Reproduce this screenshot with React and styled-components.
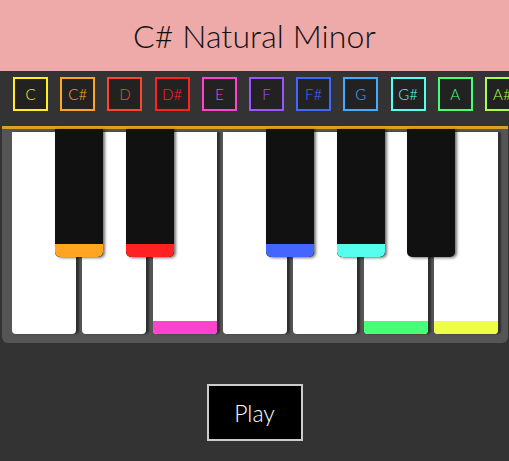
import React from 'react';
import styled, { createGlobalStyle } from 'styled-components';

const GlobalStyle = createGlobalStyle`
    html, body {
        margin: 0;
        padding: 0;
        background: #333333;
        font-family: Lato, "Open Sans", sans-serif;
        overflow: hidden;
    }
`;

const NOTES = [
    { name: 'C', color: '#ffee22' },
    { name: 'C#', color: '#ffa522' },
    { name: 'D', color: '#ff4433' },
    { name: 'D#', color: '#ff2222' },
    { name: 'E', color: '#ff44cc' },
    { name: 'F', color: '#9955ff' },
    { name: 'F#', color: '#4466ff' },
    { name: 'G', color: '#44aaff' },
    { name: 'G#', color: '#55ffee' },
    { name: 'A', color: '#44ff77' },
    { name: 'A#', color: '#aaff44' },
    { name: 'B', color: '#eeff44' },
];

const colorOf = (name) => NOTES.find(n => n.name === name).color;

const SCALE = ['C#', 'D#', 'E', 'F#', 'G#', 'A', 'B'];

// white keys, each with the black key that sits to its right (if any)
const WHITE_KEYS = [
    { name: 'C', sharp: 'C#' },
    { name: 'D', sharp: 'D#' },
    { name: 'E' },
    { name: 'F', sharp: 'F#' },
    { name: 'G', sharp: 'G#' },
    { name: 'A', sharp: 'A#' },
    { name: 'B' },
];

const Page = styled.div`
    display: flex;
    flex-direction: column;
    min-height: 461px;
    background: #333333;
`;

const Header = styled.header`
    height: 71px;
    background: #eea9a9;
    display: flex;
    align-items: center;
    justify-content: center;
`;

const Title = styled.h1`
    margin: 0;
    font-size: 32px;
    font-weight: 300;
    color: #111;
    letter-spacing: 0.1px;
`;

const NoteRow = styled.div`
    display: flex;
    gap: 12.2px;
    padding: 6px 13px 0;
    height: 49px;
    overflow: hidden;
    white-space: nowrap;
`;

const NoteBox = styled.div`
    flex-shrink: 0;
    box-sizing: border-box;
    width: 35px;
    height: 34px;
    border: 2px solid ${p => p.$color};
    background: #222222;
    color: ${p => p.$color};
    font-size: 15px;
    font-weight: 300;
    display: flex;
    align-items: center;
    justify-content: center;
`;

const Piano = styled.div`
    position: relative;
    margin: 0 1px 0 2px;
    border-top: 3px solid #d9a21f;
    background: #555555;
    border-radius: 0 0 6px 6px;
    padding: 3px 10px 9px;
    display: flex;
    gap: 6.33px;
`;

const WhiteKey = styled.div`
    position: relative;
    flex: 1;
    height: 202px;
    background: #ffffff;
    border-radius: 0 0 4px 4px;
    box-shadow: 3px 0 2px rgba(0, 0, 0, 0.45);
    display: flex;
    flex-direction: column;
    justify-content: flex-end;
`;

const BlackKey = styled.div`
    position: absolute;
    top: -3px;
    right: -27.2px;
    z-index: 2;
    width: 48px;
    height: 128px;
    background: #111111;
    border-radius: 0 0 5px 5px;
    box-shadow: 2px 1px 3px rgba(0, 0, 0, 0.55);
    display: flex;
    flex-direction: column;
    justify-content: flex-end;
    overflow: hidden;
`;

const Band = styled.div`
    height: 13px;
    background: ${p => p.$color};
    border-radius: 0 0 ${p => p.$radius}px ${p => p.$radius}px;
`;

const Footer = styled.div`
    display: flex;
    justify-content: center;
    padding-top: 41px;
`;

const PlayButton = styled.button`
    box-sizing: border-box;
    width: 96px;
    height: 57px;
    background: #000000;
    border: 2px solid #cccccc;
    color: #ffffff;
    font-family: Lato, "Open Sans", sans-serif;
    font-size: 23px;
    font-weight: 300;
    cursor: pointer;
`;

export default function App() {
    return (
        <Page>
            <GlobalStyle />
            <Header>
                <Title>C# Natural Minor</Title>
            </Header>
            <NoteRow>
                {NOTES.map(n => (
                    <NoteBox key={n.name} $color={n.color}>{n.name}</NoteBox>
                ))}
            </NoteRow>
            <Piano>
                {WHITE_KEYS.map(k => (
                    <WhiteKey key={k.name}>
                        {SCALE.includes(k.name) && <Band $color={colorOf(k.name)} $radius={4} />}
                        {k.sharp && (
                            <BlackKey>
                                {SCALE.includes(k.sharp) && <Band $color={colorOf(k.sharp)} $radius={5} />}
                            </BlackKey>
                        )}
                    </WhiteKey>
                ))}
            </Piano>
            <Footer>
                <PlayButton>Play</PlayButton>
            </Footer>
        </Page>
    );
}
